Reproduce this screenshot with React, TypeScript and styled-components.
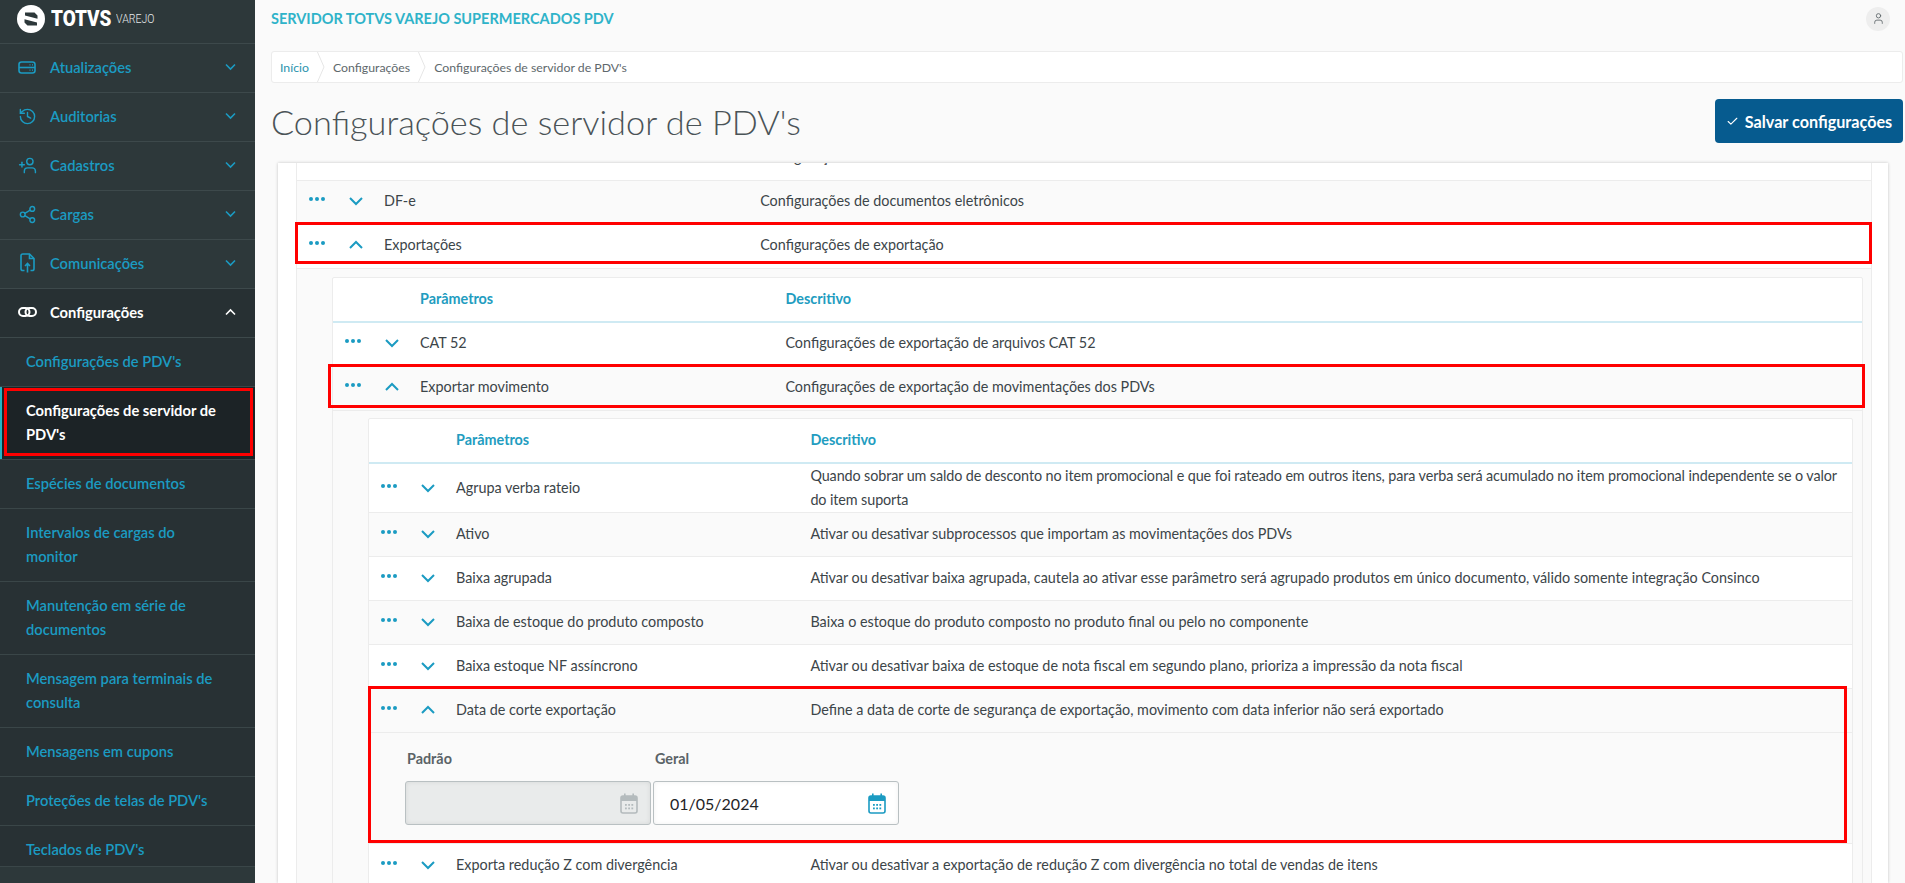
import styled, { createGlobalStyle } from "styled-components";
import { Check, History, Share2, User, UserPlus } from "lucide-react";
import type { ReactNode } from "react";

const GlobalStyle = createGlobalStyle`
  html, body {
    margin: 0;
    height: 100%;
    overflow: hidden;
    background: #fafafa;
  }
  * {
    box-sizing: border-box;
  }
`;

const FONT = `"Lato", "Noto Sans", sans-serif`;
const BLUE = "#1b9bc2";

const Page = styled.div`
  display: flex;
  height: 883px;
  overflow: hidden;
  font-family: ${FONT};
  font-size: 14.36px;
  color: #3c4549;
`;

/* sidebar */
const Sidebar = styled.aside`
  width: 255px;
  flex-shrink: 0;
  background: #2d383a;
  display: flex;
  flex-direction: column;
  overflow: hidden;
  font-size: 14.7px;
`;
const Brand = styled.div`
  height: 44px;
  flex-shrink: 0;
  padding: 5px 0 0 17px;
  display: flex;
  align-items: flex-start;
  border-bottom: 1px solid #3d494b;
`;
const BrandName = styled.span`
  display: inline-block;
  width: 59px;
  margin-left: 6px;
  font-family: "Roboto", sans-serif;
  font-weight: 900;
  font-size: 22px;
  line-height: 28px;
  color: #fff;
  transform: scaleX(0.86);
  transform-origin: left center;
`;
const BrandSub = styled.span`
  display: inline-block;
  margin-left: 6px;
  font-family: "Roboto", sans-serif;
  font-weight: 300;
  font-size: 12px;
  line-height: 28px;
  color: #e6e9ea;
  transform: scaleX(0.88);
  transform-origin: left center;
`;
const MenuItem = styled.div<{ $active?: boolean }>`
  height: 49px;
  flex-shrink: 0;
  display: flex;
  align-items: center;
  padding: 0 19px 2px 18px;
  border-bottom: 1px solid #3d494b;
  font-weight: ${(p) => (p.$active ? 700 : 600)};
  color: ${(p) => (p.$active ? "#fff" : BLUE)};
  background: ${(p) => (p.$active ? "#273033" : "transparent")};
`;
const MenuIcon = styled.span`
  width: 32px;
  display: flex;
  align-items: center;
`;
const MenuLabel = styled.span`
  flex: 1;
`;
const SubMenu = styled.div`
  background: #283134;
  flex-shrink: 0;
`;
const SubItem = styled.div<{ $active?: boolean; $short?: boolean }>`
  position: relative;
  padding: 11px 36px 13px 26px;
  min-height: ${(p) => (p.$short ? "41px" : "49px")};
  height: ${(p) => (p.$short ? "41px" : "auto")};
  line-height: 24px;
  border-bottom: 1px solid #3a4648;
  font-weight: ${(p) => (p.$active ? 700 : 600)};
  color: ${(p) => (p.$active ? "#fff" : BLUE)};
  background: ${(p) => (p.$active ? "#1c2326" : "transparent")};
  ${(p) =>
    p.$active &&
    `
    box-shadow: inset 2px 0 0 #26b3c4;
    &::after {
      content: "";
      position: absolute;
      inset: 1px 2px 3px 4px;
      border: 3px solid #ff0000;
    }
  `}
`;

/* main */
const Main = styled.main`
  flex: 1;
  min-width: 0;
  display: flex;
  flex-direction: column;
  padding: 0 2px 0 16px;
`;
const TopBar = styled.div`
  height: 37px;
  flex-shrink: 0;
  display: flex;
  align-items: center;
  justify-content: space-between;
  padding-right: 13px;
`;
const AppTitle = styled.span`
  font-size: 14.5px;
  font-weight: 700;
  color: #2fb3c9;
`;
const Avatar = styled.span`
  width: 24px;
  height: 24px;
  border-radius: 50%;
  background: #eeeeee;
  display: flex;
  align-items: center;
  justify-content: center;
  color: #5d6568;
`;
const Breadcrumb = styled.nav`
  margin-top: 14px;
  height: 32px;
  flex-shrink: 0;
  background: #fff;
  border: 1px solid #ececec;
  border-radius: 3px;
  display: flex;
  align-items: center;
  font-size: 12.3px;
  overflow: hidden;
`;
const Crumb = styled.span<{ $link?: boolean }>`
  height: 100%;
  display: flex;
  align-items: center;
  padding: 0 8px;
  color: ${(p) => (p.$link ? "#2b93ad" : "#5e686c")};
`;
const CrumbArrow = styled.svg`
  width: 8px;
  height: 32px;
  flex-shrink: 0;
  fill: none;
  stroke: #e6e6e6;
`;
const TitleRow = styled.div`
  height: 80px;
  flex-shrink: 0;
  padding-bottom: 4px;
  display: flex;
  align-items: center;
  justify-content: space-between;
`;
const PageTitle = styled.h1`
  margin: 0;
  font-size: 34.3px;
  font-weight: 300;
  color: #4a5357;
`;
const SaveButton = styled.button`
  height: 44px;
  width: 188px;
  border: 0;
  border-radius: 4px;
  background: #065b8f;
  color: #fff;
  font-family: ${FONT};
  font-size: 16.2px;
  font-weight: 700;
  display: flex;
  align-items: center;
  justify-content: center;
  gap: 6px;
`;
const Panel = styled.section`
  flex: 1;
  min-height: 0;
  overflow: hidden;
  margin: 0 15px 0 7px;
  padding: 0 16px 0 18px;
  background: #fff;
  box-shadow: 0 0 3px rgba(0, 0, 0, 0.22);
`;

/* tabela */
const Table = styled.div<{ $top?: boolean }>`
  background: #fff;
  border: 1px solid #ececec;
  border-top-width: ${(p) => (p.$top ? "0" : "1px")};
  border-radius: ${(p) => (p.$top ? "0" : "2px")};
`;
const RowGrid = styled.div`
  display: grid;
  grid-template-columns: 87px 23.9% 1fr;
  align-items: center;
`;
const HeadRow = styled(RowGrid)`
  height: 45px;
  padding-bottom: 2px;
  border-bottom: 2px solid #cfeaf3;
  font-weight: 700;
  color: #229cc0;
`;
const Row = styled(RowGrid)<{ $alt?: boolean; $pad: number }>`
  min-height: 44px;
  padding-bottom: ${(p) => p.$pad}px;
  line-height: 24px;
  border-bottom: 1px solid #ececec;
  background: ${(p) => (p.$alt ? "#fafafa" : "#fff")};
`;
const FirstRow = styled(Row)`
  margin-top: -26px;
`;
const RowActions = styled.div`
  display: flex;
  align-items: center;
  padding-left: 12px;
  gap: 24px;
`;
const Dots = styled.span`
  display: flex;
  gap: 2px;
  margin-top: -4px;
  width: 16px;
  i {
    width: 4px;
    height: 4px;
    border-radius: 50%;
    background: ${BLUE};
  }
`;
const Chevron = styled.svg`
  width: 14px;
  height: 14px;
  fill: none;
  stroke: ${BLUE};
  stroke-width: 2;
`;
const TightText = styled.span`
  letter-spacing: -0.1px;
`;
const Nested = styled.div<{ $top: number; $right: number }>`
  background: #fafafa;
  padding: ${(p) => p.$top}px ${(p) => p.$right}px 8px 35px;
  border-bottom: 1px solid #ececec;
`;
const Marked = styled.div<{ $inset: string }>`
  position: relative;
  &::after {
    content: "";
    position: absolute;
    inset: ${(p) => p.$inset};
    border: 3px solid #ff0000;
    pointer-events: none;
  }
`;
const FieldArea = styled.div`
  background: #fafafa;
  display: grid;
  grid-template-columns: 246px 246px;
  gap: 0 2px;
  padding: 17px 0 18px 36px;
  border-bottom: 1px solid #ececec;
`;
const Field = styled.div`
  display: flex;
  flex-direction: column;
`;
const FieldLabel = styled.label`
  height: 31px;
  padding-left: 2px;
  font-weight: 700;
  color: #5a6367;
`;
const FieldBox = styled.div<{ $disabled?: boolean }>`
  height: 44px;
  border: 1px solid #b9c0c2;
  border-radius: 3px;
  display: flex;
  align-items: center;
  justify-content: space-between;
  padding: 0 12px 0 16px;
  font-size: 16px;
  color: #1f2427;
  background: ${(p) => (p.$disabled ? "#e9ebeb" : "#fff")};
  box-shadow: inset 0 0 5px rgba(0, 0, 0, ${(p) => (p.$disabled ? 0.08 : 0.06)});
`;

const ServerIcon = () => (
  <svg width="18" height="13" viewBox="0 0 18 13" fill="none" stroke="currentColor" strokeWidth="1.6">
    <rect x="1" y="1" width="16" height="11" rx="2.5" />
    <path d="M1 6.5h16" />
    <path d="M11.5 3.8h1M14 3.8h1M11.5 9.2h1M14 9.2h1" strokeWidth="1.2" />
  </svg>
);

const FileIcon = () => (
  <svg width="15" height="20" viewBox="0 0 15 20" fill="none" stroke="currentColor" strokeWidth="1.6" style={{ marginLeft: 2 }}>
    <path d="M4.5 17.5H2.8A1.8 1.8 0 0 1 1 15.7V2.8A1.8 1.8 0 0 1 2.8 1H9.5L14 5.5v10.2a1.8 1.8 0 0 1-1.8 1.8h-1.7" />
    <path d="M9.5 1v4.5H14" />
    <path d="M7.5 19.5V10.5M5 13l2.5-2.5L10 13" />
  </svg>
);

const LinkIcon = () => (
  <svg width="19" height="10" viewBox="0 0 19 10" fill="none" stroke="currentColor" strokeWidth="2">
    <rect x="1" y="1" width="10.5" height="8" rx="4" />
    <rect x="7.5" y="1" width="10.5" height="8" rx="4" />
  </svg>
);

const menu = [
  { label: "Atualizações", icon: <ServerIcon /> },
  { label: "Auditorias", icon: <History size={19} strokeWidth={1.8} /> },
  { label: "Cadastros", icon: <UserPlus size={19} strokeWidth={1.8} style={{ transform: "scaleX(-1)" }} /> },
  { label: "Cargas", icon: <Share2 size={19} strokeWidth={1.8} /> },
  { label: "Comunicações", icon: <FileIcon /> },
];

const subMenu = [
  "Configurações de PDV's",
  "Configurações de servidor de PDV's",
  "Espécies de documentos",
  "Intervalos de cargas do monitor",
  "Manutenção em série de documentos",
  "Mensagem para terminais de consulta",
  "Mensagens em cupons",
  "Proteções de telas de PDV's",
  "Teclados de PDV's",
];

const params = [
  ["Ativo", "Ativar ou desativar subprocessos que importam as movimentações dos PDVs"],
  [
    "Baixa agrupada",
    "Ativar ou desativar baixa agrupada, cautela ao ativar esse parâmetro será agrupado produtos em único documento, válido somente integração Consinco",
  ],
  ["Baixa de estoque do produto composto", "Baixa o estoque do produto composto no produto final ou pelo no componente"],
  ["Baixa estoque NF assíncrono", "Ativar ou desativar baixa de estoque de nota fiscal em segundo plano, prioriza a impressão da nota fiscal"],
];

const Logo = () => (
  <svg width="28" height="28" viewBox="0 0 28 28">
    <circle cx="14" cy="14" r="14" fill="#fff" />
    <path d="M8 7.5h9.5L20.5 10.5v3.2L8 10.6zM7.5 14.3L20 17.4v3.1H10.5L7.5 17.5z" fill="#2d383a" />
  </svg>
);

const Arrow = ({ open }: { open?: boolean }) => (
  <Chevron viewBox="0 0 14 14">
    <polyline points={open ? "1,10 7,4 13,10" : "1,4 7,10 13,4"} />
  </Chevron>
);

const SmallChevron = ({ open, color }: { open?: boolean; color: string }) => (
  <svg width="11" height="8" viewBox="0 0 11 8" fill="none" stroke={color} strokeWidth="1.6">
    <polyline points={open ? "1,6.5 5.5,2 10,6.5" : "1,1.5 5.5,6 10,1.5"} />
  </svg>
);

const Calendar = ({ color }: { color: string }) => (
  <svg width="18" height="21" viewBox="0 0 18 21">
    <rect x="1" y="3" width="16" height="17" rx="2" fill="none" stroke={color} strokeWidth="1.6" />
    <rect x="1" y="3" width="16" height="5" fill={color} />
    <rect x="4" y="0.5" width="1.6" height="4" fill={color} />
    <rect x="12.4" y="0.5" width="1.6" height="4" fill={color} />
    {[5, 8.2, 11.4].flatMap((x) =>
      [11, 14.5].map((y) => <rect key={`${x}-${y}`} x={x} y={y} width="1.8" height="1.8" fill={color} />)
    )}
  </svg>
);

const ParamRow = ({
  name,
  text,
  alt,
  open,
  pad = 3,
}: {
  name: string;
  text: ReactNode;
  alt?: boolean;
  open?: boolean;
  pad?: number;
}) => (
  <Row $alt={alt} $pad={pad}>
    <RowActions>
      <Dots>
        <i />
        <i />
        <i />
      </Dots>
      <Arrow open={open} />
    </RowActions>
    <span>{name}</span>
    <span>{text}</span>
  </Row>
);

const CrumbSeparator = () => (
  <CrumbArrow viewBox="0 0 8 32">
    <polyline points="0,0 7,16 0,32" />
  </CrumbArrow>
);

const Head = () => (
  <HeadRow>
    <span />
    <span>Parâmetros</span>
    <span>Descritivo</span>
  </HeadRow>
);

export default function App() {
  return (
    <>
      <GlobalStyle />
      <Page>
        <Sidebar>
          <Brand>
            <Logo />
            <BrandName>TOTVS</BrandName>
            <BrandSub>VAREJO</BrandSub>
          </Brand>
          {menu.map((m) => (
            <MenuItem key={m.label}>
              <MenuIcon>{m.icon}</MenuIcon>
              <MenuLabel>{m.label}</MenuLabel>
              <SmallChevron color={BLUE} />
            </MenuItem>
          ))}
          <MenuItem $active>
            <MenuIcon>
              <LinkIcon />
            </MenuIcon>
            <MenuLabel>Configurações</MenuLabel>
            <SmallChevron open color="#fff" />
          </MenuItem>
          <SubMenu>
            {subMenu.map((s, i) => (
              <SubItem key={s} $active={i === 1} $short={i === subMenu.length - 1}>
                {s}
              </SubItem>
            ))}
          </SubMenu>
        </Sidebar>
        <Main>
          <TopBar>
            <AppTitle>SERVIDOR TOTVS VAREJO SUPERMERCADOS PDV</AppTitle>
            <Avatar>
              <User size={13} strokeWidth={1.6} />
            </Avatar>
          </TopBar>
          <Breadcrumb>
            <Crumb $link>Início</Crumb>
            <CrumbSeparator />
            <Crumb>Configurações</Crumb>
            <CrumbSeparator />
            <Crumb>Configurações de servidor de PDV's</Crumb>
          </Breadcrumb>
          <TitleRow>
            <PageTitle>Configurações de servidor de PDV's</PageTitle>
            <SaveButton>
              <Check size={13} strokeWidth={2} />
              Salvar configurações
            </SaveButton>
          </TitleRow>
          <Panel>
            <Table $top>
              <FirstRow $pad={3}>
                <span />
                <span />
                <span>Configurações diversas</span>
              </FirstRow>
              <ParamRow alt name="DF-e" text="Configurações de documentos eletrônicos" />
              <Marked $inset="-3px -1px 5px -2px">
                <ParamRow open name="Exportações" text="Configurações de exportação" />
              </Marked>
              <Nested $top={8} $right={8}>
                <Table>
                  <Head />
                  <ParamRow name="CAT 52" text="Configurações de exportação de arquivos CAT 52" />
                  <Marked $inset="-3px -3px 3px -5px">
                    <ParamRow alt open name="Exportar movimento" text="Configurações de exportação de movimentações dos PDVs" />
                  </Marked>
                  <Nested $top={7} $right={9}>
                    <Table>
                      <Head />
                      <ParamRow
                        pad={0}
                        name="Agrupa verba rateio"
                        text={
                          <TightText>
                            Quando sobrar um saldo de desconto no item promocional e que foi rateado em outros itens, para verba será acumulado no item promocional independente se o valor do item suporta
                          </TightText>
                        }
                      />
                      {params.map(([name, text], i) => (
                        <ParamRow key={name} pad={1} alt={i % 2 === 0} name={name} text={text} />
                      ))}
                      <Marked $inset="-3px 5px 1px -1px">
                        <ParamRow pad={1} alt open name="Data de corte exportação" text="Define a data de corte de segurança de exportação, movimento com data inferior não será exportado" />
                        <FieldArea>
                          <Field>
                            <FieldLabel>Padrão</FieldLabel>
                            <FieldBox $disabled>
                              <span />
                              <Calendar color="#b4bbbd" />
                            </FieldBox>
                          </Field>
                          <Field>
                            <FieldLabel>Geral</FieldLabel>
                            <FieldBox>
                              01/05/2024
                              <Calendar color={BLUE} />
                            </FieldBox>
                          </Field>
                        </FieldArea>
                      </Marked>
                      <ParamRow pad={1} name="Exporta redução Z com divergência" text="Ativar ou desativar a exportação de redução Z com divergência no total de vendas de itens" />
                    </Table>
                  </Nested>
                </Table>
              </Nested>
            </Table>
          </Panel>
        </Main>
      </Page>
    </>
  );
}
